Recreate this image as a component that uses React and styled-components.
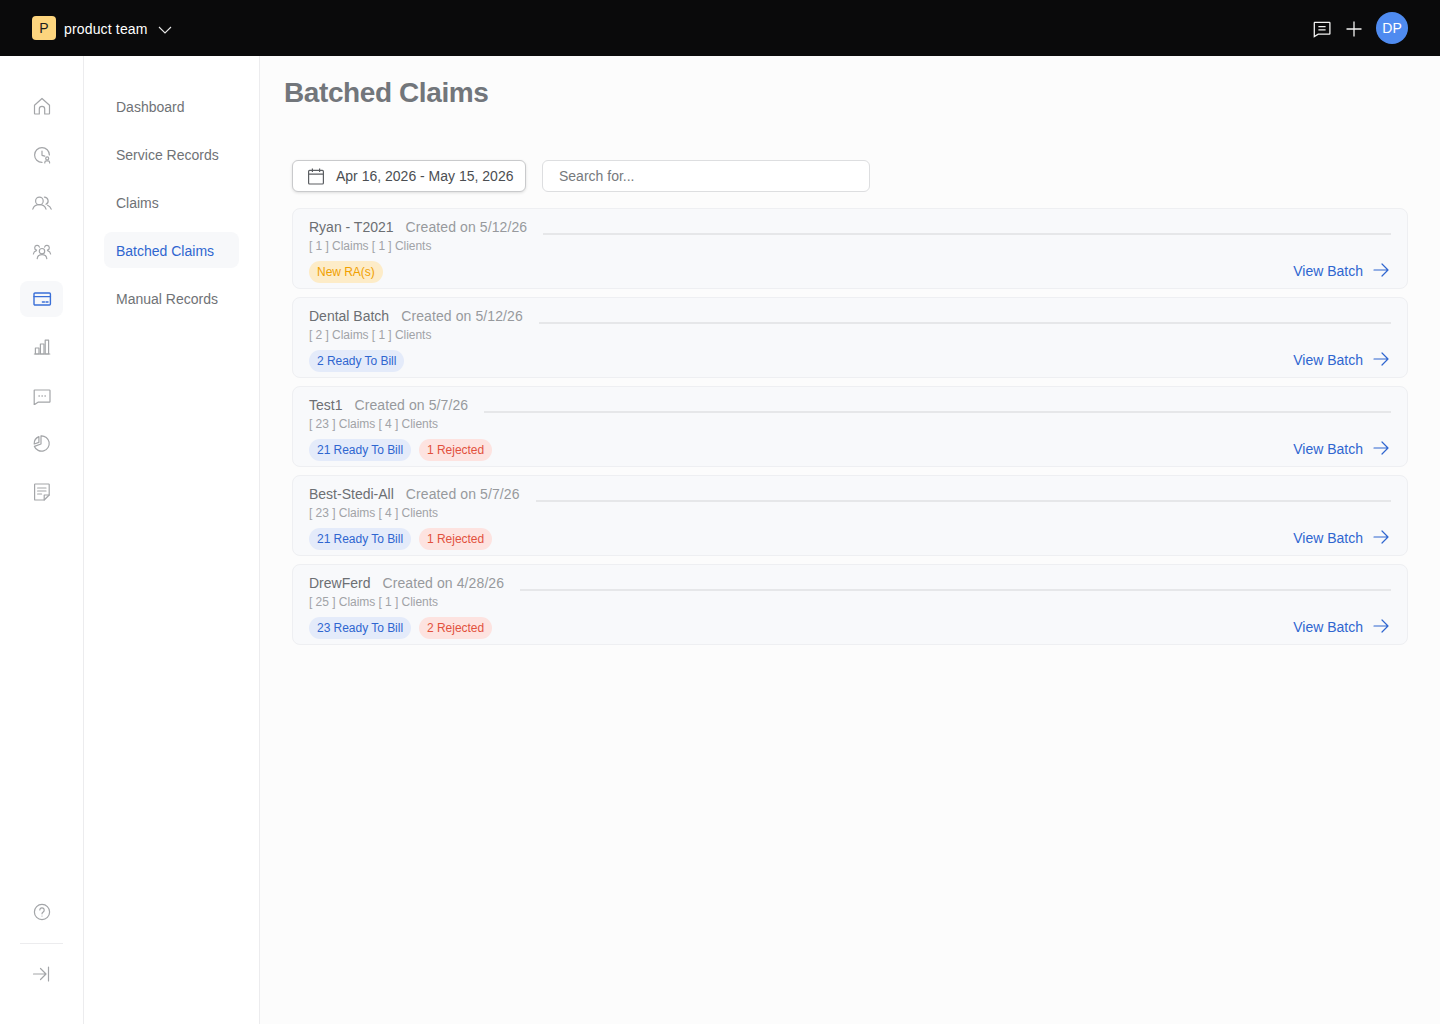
import styled, { createGlobalStyle } from 'styled-components';

const GlobalStyle = createGlobalStyle`
  * { box-sizing: border-box; }
  html, body { margin: 0; padding: 0; height: 100%; }
  body {
    font-family: 'Liberation Sans', Arial, sans-serif;
    background: #fff;
  }
`;

const Page = styled.div`
  width: 1440px;
  height: 1024px;
  display: flex;
  flex-direction: column;
  overflow: hidden;
`;

const TopBar = styled.header`
  height: 56px;
  flex: none;
  background: #0a0a0b;
  display: flex;
  align-items: center;
  justify-content: space-between;
  padding: 0 32px;
`;

const TeamSwitcher = styled.div`
  display: flex;
  align-items: center;
  color: #fff;
  font-size: 14px;
`;

const TeamLogo = styled.div`
  width: 24px;
  height: 24px;
  border-radius: 4px;
  background: #fdd57e;
  color: #1c1c1c;
  font-size: 14px;
  display: flex;
  align-items: center;
  justify-content: center;
  margin-right: 8px;
`;

const TeamName = styled.span`
  margin-right: 10px;
  padding-top: 2px;
  letter-spacing: 0.16px;
`;

const TopActions = styled.div`
  display: flex;
  align-items: center;
  gap: 12px;
`;

const TopIcon = styled.svg`
  width: 20px;
  height: 20px;
  fill: none;
  stroke: #f2f2f2;
  stroke-width: 1.3;
  margin-top: 2px;
`;

const Avatar = styled.div`
  width: 32px;
  height: 32px;
  border-radius: 50%;
  background: #4f8bf0;
  color: #fff;
  font-size: 14px;
  display: flex;
  align-items: center;
  justify-content: center;
`;

const Body = styled.div`
  flex: 1;
  display: flex;
  min-height: 0;
`;

const Rail = styled.nav`
  width: 84px;
  flex: none;
  border-right: 1px solid #ececee;
  padding: 33px 20px 32px;
  display: flex;
  flex-direction: column;
  justify-content: space-between;
`;

const RailGroup = styled.div`
  display: flex;
  flex-direction: column;
  gap: 12px;
`;

const RailItem = styled.div`
  width: 43px;
  height: 36px;
  border-radius: 8px;
  display: flex;
  align-items: center;
  justify-content: center;
  background: ${(p) => (p.$active ? '#f7f8fa' : 'transparent')};
  color: ${(p) => (p.$active ? '#3a6fd8' : '#a3a5a8')};
`;

const RailIcon = styled.svg`
  width: 20px;
  height: 20px;
  fill: none;
  stroke: currentColor;
  stroke-width: 1.2;
  stroke-linecap: round;
  stroke-linejoin: round;
`;

const RailFoot = styled.div`
  display: flex;
  flex-direction: column;
`;

const RailDivider = styled.div`
  height: 1px;
  background: #ececee;
  margin: 13px 0 12px;
`;

const SubNav = styled.nav`
  width: 176px;
  flex: none;
  border-right: 1px solid #ececee;
  padding: 32px 20px 0;
  display: flex;
  flex-direction: column;
  gap: 12px;
`;

const SubNavItem = styled.div`
  height: 36px;
  border-radius: 8px;
  padding: 2px 12px 0;
  display: flex;
  align-items: center;
  font-size: 14px;
  background: ${(p) => (p.$active ? '#f7f8fa' : 'transparent')};
  color: ${(p) => (p.$active ? '#2f66d0' : '#6f7276')};
`;

const Main = styled.main`
  flex: 1;
  background: #fcfcfc;
  padding: 0 32px;
`;

const Title = styled.h1`
  margin: 19px 0 49px -8px;
  height: 36px;
  line-height: 36px;
  font-size: 28px;
  font-weight: 700;
  letter-spacing: -0.4px;
  color: #72767b;
`;

const Filters = styled.div`
  display: flex;
  gap: 16px;
  margin-bottom: 16px;
`;

const DateButton = styled.div`
  width: 234px;
  height: 32px;
  background: #fff;
  border: 1px solid #c9cacc;
  border-radius: 6px;
  box-shadow: 0 1px 3px rgba(0, 0, 0, 0.12);
  display: flex;
  align-items: center;
  padding-left: 14px;
  gap: 11px;
  font-size: 14px;
  color: #4b4e52;
`;

const SearchBox = styled.div`
  width: 328px;
  height: 32px;
  background: #fff;
  border: 1px solid #dddee0;
  border-radius: 6px;
  display: flex;
  align-items: center;
  padding-left: 16px;
  font-size: 14px;
  color: #76797d;
`;

const BatchList = styled.div`
  display: flex;
  flex-direction: column;
  gap: 8px;
`;

const BatchCard = styled.article`
  height: 81px;
  background: #f8f9fb;
  border: 1px solid #eeeff2;
  border-radius: 8px;
  padding: 9px 16px 0;
`;

const BatchHead = styled.div`
  display: flex;
  align-items: center;
  height: 18px;
  font-size: 14px;
  white-space: nowrap;
`;

const BatchName = styled.span`
  color: #6c6f73;
  margin-right: 12px;
`;

const BatchDate = styled.span`
  color: #97999d;
  margin-right: 16px;
  letter-spacing: 0.1px;
`;

const HeadRule = styled.div`
  flex: 1;
  height: 2px;
  background: #e6e7e9;
  margin-top: 14px;
`;

const BatchCounts = styled.div`
  margin-top: 1px;
  height: 18px;
  line-height: 18px;
  font-size: 12px;
  letter-spacing: -0.04px;
  color: #a1a3a7;
`;

const BatchFoot = styled.div`
  margin-top: 6px;
  display: flex;
  align-items: center;
  justify-content: space-between;
`;

const Pills = styled.div`
  display: flex;
  gap: 8px;
`;

const tones = {
  blue: { bg: '#e4ebfa', fg: '#2f66d0' },
  red: { bg: '#fde3e0', fg: '#e2513d' },
  amber: { bg: '#fdecc8', fg: '#f0a000' },
};

const Pill = styled.span`
  height: 22px;
  border-radius: 11px;
  padding: 0 8px;
  display: flex;
  align-items: center;
  font-size: 12px;
  letter-spacing: -0.03px;
  background: ${(p) => tones[p.$tone].bg};
  color: ${(p) => tones[p.$tone].fg};
`;

const ViewLink = styled.a`
  display: flex;
  align-items: center;
  gap: 10px;
  padding: 0 2px 2px 0;
  font-size: 14px;
  color: #2f66d0;
`;

const ArrowIcon = styled.svg`
  width: 16px;
  height: 14px;
  margin-top: -2px;
  fill: none;
  stroke: currentColor;
  stroke-width: 1.2;
  stroke-linecap: round;
  stroke-linejoin: round;
`;

const railIcons = [
  <path d="M2.5 8.2 10 1.5l7.5 6.7v8.4a.4.4 0 0 1-.4.4h-4.4v-5a2.7 2.7 0 0 0-5.4 0v5H2.9a.4.4 0 0 1-.4-.4Z" />,
  <><path d="M17.4 10a7.4 7.4 0 1 0-7.4 7.4" /><path d="M10 6v4.3l2.8.8" /><circle cx="15.2" cy="13.4" r="1.5" /><path d="M12.8 18v-.6a1.6 1.6 0 0 1 1.6-1.6h1.6a1.6 1.6 0 0 1 1.6 1.6v.6" /></>,
  <><circle cx="7.4" cy="7.9" r="3.8" /><path d="M.8 16.2c.8-2.9 3.3-4.6 6.6-4.6s5.8 1.7 6.6 4.6" /><path d="M12.4 4.1a3.8 3.8 0 0 1 1.6 7.2" /><path d="M15.6 12.2c1.8.7 3.1 2.2 3.6 4" /></>,
  <><circle cx="10" cy="10.2" r="2.7" /><path d="M5.2 17.6c.3-2.4 2.2-3.9 4.8-3.9s4.5 1.5 4.8 3.9" /><path d="M7.4 6.2A2.4 2.4 0 1 0 4.6 9.2" /><path d="M1.4 13c.2-1.6 1.3-2.9 3-3.4" /><path d="M12.6 6.2a2.4 2.4 0 1 1 2.8 3" /><path d="M18.6 13c-.2-1.6-1.3-2.9-3-3.4" /></>,
  <><rect x="2" y="4" width="16.4" height="12" rx="1" strokeWidth="1.4" /><path d="M2 7.6h16.4" strokeWidth="1.4" /><path d="M10.4 13h2M14 13h2" strokeWidth="1.4" /></>,
  <><path d="M2.4 17h15.4" /><rect x="3.4" y="11" width="3.6" height="6" /><rect x="8.4" y="7" width="3.6" height="10" /><rect x="13.2" y="3.2" width="3.4" height="13.8" /></>,
  <><path d="M2.6 5h14.8a.6.6 0 0 1 .6.6v11a.6.6 0 0 1-.6.6H6l-3.8 2.6V5.4a.4.4 0 0 1 .4-.4Z" /><path d="M7 11h.3M10 11h.3M13 11h.3" strokeWidth="1.4" /></>,
  <><path d="M9 2.8a7.7 7.7 0 1 1-6.6 10.6L9 11Z" /><path d="M6.9 3.6a7.7 7.7 0 0 0-4.7 7.4l4.7-1.6Z" /></>,
  <><path d="M17.2 14V3.6a.6.6 0 0 0-.6-.6H3.2a.6.6 0 0 0-.6.6v14.8a.6.6 0 0 0 .6.6h9Z" /><path d="M12.2 19v-5h5" /><path d="M5.6 7h8.4M5.6 10h8.4M5.6 13h4" /></>,
];

const batches = [
  { name: 'Ryan - T2021', date: '5/12/26', claims: 1, clients: 1, pills: [['amber', 'New RA(s)']] },
  { name: 'Dental Batch', date: '5/12/26', claims: 2, clients: 1, pills: [['blue', '2 Ready To Bill']] },
  { name: 'Test1', date: '5/7/26', claims: 23, clients: 4, pills: [['blue', '21 Ready To Bill'], ['red', '1 Rejected']] },
  { name: 'Best-Stedi-All', date: '5/7/26', claims: 23, clients: 4, pills: [['blue', '21 Ready To Bill'], ['red', '1 Rejected']] },
  { name: 'DrewFerd', date: '4/28/26', claims: 25, clients: 1, pills: [['blue', '23 Ready To Bill'], ['red', '2 Rejected']] },
];

const navItems = ['Dashboard', 'Service Records', 'Claims', 'Batched Claims', 'Manual Records'];

export default function App() {
  return (
    <Page>
      <GlobalStyle />
      <TopBar>
        <TeamSwitcher>
          <TeamLogo>P</TeamLogo>
          <TeamName>product team</TeamName>
          <svg width="14" height="8" viewBox="0 0 14 8" fill="none" stroke="#e8e8e8" strokeWidth="1.1" style={{ marginTop: 3 }}>
            <path d="M1 1l6 6 6-6" />
          </svg>
        </TeamSwitcher>
        <TopActions>
          <TopIcon viewBox="0 0 20 20">
            <path d="M2.6 3.4h14.8a.5.5 0 0 1 .5.5v10.8a.5.5 0 0 1-.5.5H6.2l-3.9 2.4V3.9a.5.5 0 0 1 .3-.5Z" />
            <path d="M6.4 7.6h7.2M6.4 10.8h7.2" />
          </TopIcon>
          <TopIcon viewBox="0 0 20 20">
            <path d="M10 2.5v15M2.5 10h15" />
          </TopIcon>
          <Avatar>DP</Avatar>
        </TopActions>
      </TopBar>
      <Body>
        <Rail>
          <RailGroup>
            {railIcons.map((icon, i) => (
              <RailItem key={i} $active={i === 4}>
                <RailIcon viewBox="0 0 20 20">{icon}</RailIcon>
              </RailItem>
            ))}
          </RailGroup>
          <RailFoot>
            <RailItem>
              <RailIcon viewBox="0 0 20 20">
                <circle cx="10" cy="10" r="7.6" />
                <path d="M7.8 8a2.2 2.2 0 1 1 3.4 1.9c-.8.5-1.2 1-1.2 1.9" />
                <path d="M10 14h.01" />
              </RailIcon>
            </RailItem>
            <RailDivider />
            <RailItem>
              <RailIcon viewBox="0 0 20 20">
                <path d="M1.5 10h12.5M8.5 4.5 14 10l-5.5 5.5M16.5 3v14" />
              </RailIcon>
            </RailItem>
          </RailFoot>
        </Rail>
        <SubNav>
          {navItems.map((item) => (
            <SubNavItem key={item} $active={item === 'Batched Claims'}>{item}</SubNavItem>
          ))}
        </SubNav>
        <Main>
          <Title>Batched Claims</Title>
          <Filters>
            <DateButton>
              <svg width="18" height="18" viewBox="0 0 18 18" fill="none" stroke="#5c5f63" strokeWidth="1.2">
                <rect x="1.6" y="3.4" width="14.8" height="13.6" rx="1" />
                <path d="M1.6 7.2h14.8M5.4 1.6V5M12.6 1.6V5" />
              </svg>
              Apr 16, 2026 - May 15, 2026
            </DateButton>
            <SearchBox>Search for...</SearchBox>
          </Filters>
          <BatchList>
            {batches.map((b) => (
              <BatchCard key={b.name}>
                <BatchHead>
                  <BatchName>{b.name}</BatchName>
                  <BatchDate>Created on {b.date}</BatchDate>
                  <HeadRule />
                </BatchHead>
                <BatchCounts>[ {b.claims} ] Claims [ {b.clients} ] Clients</BatchCounts>
                <BatchFoot>
                  <Pills>
                    {b.pills.map(([tone, label]) => (
                      <Pill key={label} $tone={tone}>{label}</Pill>
                    ))}
                  </Pills>
                  <ViewLink>
                    View Batch
                    <ArrowIcon viewBox="0 0 16 14">
                      <path d="M1 7h14M9 1l6 6-6 6" />
                    </ArrowIcon>
                  </ViewLink>
                </BatchFoot>
              </BatchCard>
            ))}
          </BatchList>
        </Main>
      </Body>
    </Page>
  );
}
